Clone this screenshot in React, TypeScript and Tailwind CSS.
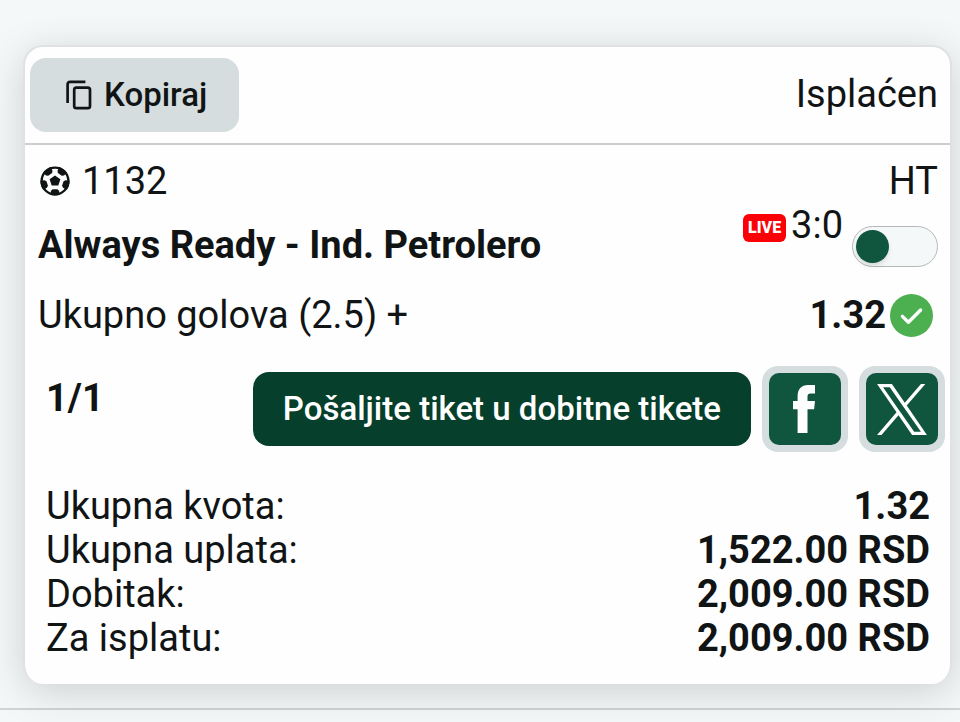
import React, { useState } from 'react';

// ============================================================================
// Ticket Data
// ============================================================================

interface SummaryRow {
  label: string;
  value: string;
}

const summaryRows: SummaryRow[] = [
  { label: 'Ukupna kvota:', value: '1.32' },
  { label: 'Ukupna uplata:', value: '1,522.00 RSD' },
  { label: 'Dobitak:', value: '2,009.00 RSD' },
  { label: 'Za isplatu:', value: '2,009.00 RSD' },
];

// ============================================================================
// Icons
// ============================================================================

function CopyIcon() {
  return (
    <svg
      viewBox="0 0 26 30"
      className="h-[30px] w-[26px]"
      fill="none"
      stroke="currentColor"
      strokeWidth="2.7"
      aria-hidden="true"
    >
      <path d="M1.6 23V4.2a2.4 2.4 0 0 1 2.4-2.4H19.4" />
      <rect x="8.2" y="7.6" width="15.8" height="20.6" rx="2.2" />
    </svg>
  );
}

function SoccerIcon() {
  return (
    <svg viewBox="0 0 30 30" className="size-[30px]" fill="currentColor" aria-hidden="true">
      <defs>
        <clipPath id="ball">
          <circle cx="15" cy="15" r="14.6" />
        </clipPath>
      </defs>
      <circle cx="15" cy="15" r="13.4" fill="none" stroke="currentColor" strokeWidth="2.4" />
      <path d="M15 9.4l5.4 3.9-2.1 6.3h-6.6l-2.1-6.3z" />
      <g clipPath="url(#ball)">
        <path id="patch" d="M10 30l1-5.2 1.6-1.6h4.8l1.6 1.6 1 5.2z" />
        <use href="#patch" transform="rotate(72 15 15)" />
        <use href="#patch" transform="rotate(144 15 15)" />
        <use href="#patch" transform="rotate(216 15 15)" />
        <use href="#patch" transform="rotate(288 15 15)" />
      </g>
    </svg>
  );
}

function FacebookIcon() {
  return (
    <svg viewBox="0 0 24 48" className="h-12 w-6" fill="currentColor" aria-hidden="true">
      <path d="M4.6 48V24.2H0V16h4.6v-4.6C4.6 4 8.4 0 15 0h7v8.4h-4.6c-2 0-2.9 1-2.9 2.9V16H22l-.9 8.2h-6.6V48z" />
    </svg>
  );
}

function XIcon() {
  return (
    <svg viewBox="0 0 1200 1227" className="h-[51px] w-[50px]" fill="currentColor" aria-hidden="true">
      <path d="M714.163 519.284L1160.89 0H1055.03L667.137 450.887L357.328 0H0L468.492 681.821L0 1226.37H105.866L515.491 750.218L842.672 1226.37H1200L714.137 519.284H714.163ZM569.165 687.828L521.697 619.934L144.011 79.6944H306.615L611.412 515.685L658.88 583.579L1055.08 1150.3H892.476L569.165 687.854V687.828Z" />
    </svg>
  );
}

function WonIcon() {
  return (
    <svg viewBox="0 0 43 43" className="size-[43px]" role="img" aria-label="Dobitan">
      <circle cx="21.5" cy="21.5" r="21.5" fill="#4caf50" />
      <path
        d="M12.4 22.4l6 5.8L30.6 16"
        fill="none"
        stroke="#fff"
        strokeWidth="3.4"
        strokeLinecap="round"
        strokeLinejoin="round"
      />
    </svg>
  );
}

// ============================================================================
// Share Button Component
// ============================================================================

interface ShareButtonProps {
  label: string;
  children: React.ReactNode;
}

function ShareButton({ label, children }: ShareButtonProps) {
  return (
    <button
      type="button"
      aria-label={label}
      className="flex size-[86px] shrink-0 items-center justify-center rounded-2xl bg-[#d5dddf] p-[7px] text-white"
    >
      <span className="flex size-full items-center justify-center rounded-[10px] bg-[#10553e]">
        {children}
      </span>
    </button>
  );
}

// ============================================================================
// Ticket Page
// ============================================================================

export default function App() {
  const [notify, setNotify] = useState(false);

  return (
    <main className="min-h-screen overflow-hidden bg-[#f4f8f9] font-['Roboto',sans-serif] text-[38px] leading-[44px] text-[#111414]">
      <div className="border-b-2 border-[#d0d4d5] pt-[45px] pr-2 pb-6 pl-[23px]">
        <article className="rounded-[20px] border-2 border-b-0 border-[#e0e2e2] bg-[#fefefe] shadow-[0_8px_40px_rgba(0,0,0,0.16)]">
          <header className="flex items-center justify-between border-b-2 border-[#cccece] pt-[11px] pr-3 pb-[11px] pl-[5px]">
            <button
              type="button"
              className="flex h-[74px] items-center gap-3 rounded-2xl bg-[#d5dddf] pr-8 pl-9 text-[33px] font-medium"
            >
              <CopyIcon />
              Kopiraj
            </button>
            <span className="pb-[2px]">Isplaćen</span>
          </header>

          <section className="pr-3 pl-[13px]">
            <div className="flex items-center justify-between pt-[14px]">
              <span className="flex items-center gap-3 pl-[2px]">
                <SoccerIcon />
                1132
              </span>
              <span>HT</span>
            </div>

            <div className="flex items-start justify-between">
              <h2 className="pt-5 font-bold">Always Ready - Ind. Petrolero</h2>
              <div className="flex items-start gap-[9px]">
                <div className="flex items-center gap-[5px]">
                  <span className="mt-[6px] h-7 w-[43px] rounded-md bg-[#fb0007] text-center text-[16px] leading-7 font-black text-white">
                    LIVE
                  </span>
                  <span>3:0</span>
                </div>
                <input
                  type="checkbox"
                  aria-label="Obaveštenja"
                  checked={notify}
                  onChange={() => setNotify(!notify)}
                  className="mt-[23px] flex h-[41px] w-[86px] appearance-none items-center rounded-full border border-[#b5b9ba] bg-[#f4f8f9] px-[3px] before:size-[33px] before:rounded-full before:bg-[#10553e] before:shadow-md checked:justify-end"
                />
              </div>
            </div>

            <div className="flex items-center justify-between pt-[26px] pr-[5px]">
              <span>Ukupno golova (2.5) +</span>
              <span className="flex items-center gap-1 font-bold">
                1.32
                <WonIcon />
              </span>
            </div>
          </section>

          <div className="flex items-center justify-between pt-[29px] pr-[5px] pl-[21px]">
            <span className="pb-[22px] font-bold">1/1</span>
            <div className="flex items-center gap-[11px]">
              <button
                type="button"
                className="h-[74px] rounded-2xl bg-[#063f2b] px-[30px] text-[33px] font-medium text-white"
              >
                Pošaljite tiket u dobitne tikete
              </button>
              <ShareButton label="Facebook">
                <FacebookIcon />
              </ShareButton>
              <ShareButton label="X">
                <XIcon />
              </ShareButton>
            </div>
          </div>

          <dl className="pt-8 pr-5 pb-6 pl-[21px]">
            {summaryRows.map((row) => (
              <div key={row.label} className="flex justify-between">
                <dt>{row.label}</dt>
                <dd className="font-bold">{row.value}</dd>
              </div>
            ))}
          </dl>
        </article>
      </div>
    </main>
  );
}
